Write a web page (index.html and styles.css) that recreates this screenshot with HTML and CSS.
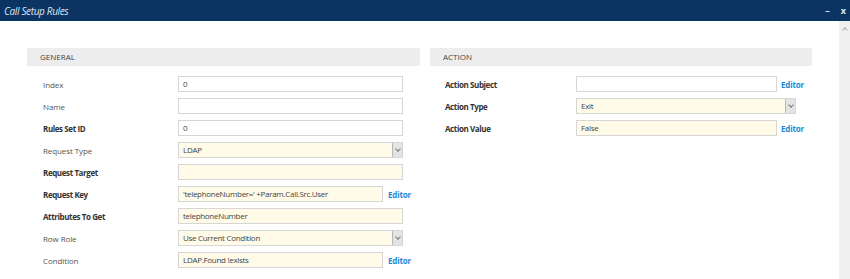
FILE: index.html
```html
<!DOCTYPE html>
<html lang="en">
<head>
  <meta charset="UTF-8" />
  <title>Call Setup Rules</title>
  <link rel="stylesheet" href="styles.css">
</head>
<body>
  <!-- Window title bar -->
  <div class="titlebar">
    <span class="title">Call Setup Rules</span>
    <span class="win-btn">&ndash;</span>
    <span class="win-btn close">x</span>
  </div>

  <div class="content">
    <div class="main">
      <!-- General section -->
      <div class="panel general">
        <div class="panel-head">GENERAL</div>
        <div class="rows">
          <div class="row"><span class="label">Index</span><div class="field">0</div></div>
          <div class="row"><span class="label">Name</span><div class="field"></div></div>
          <div class="row"><span class="label strong">Rules Set ID</span><div class="field">0</div></div>
          <div class="row"><span class="label">Request Type</span><div class="field select changed">LDAP<span class="arrow"></span></div></div>
          <div class="row"><span class="label strong">Request Target</span><div class="field changed"></div></div>
          <div class="row"><span class="label strong">Request Key</span><div class="field short changed">'telephoneNumber=' +Param.Call.Src.User</div><a class="editor">Editor</a></div>
          <div class="row"><span class="label strong">Attributes To Get</span><div class="field changed">telephoneNumber</div></div>
          <div class="row"><span class="label">Row Role</span><div class="field select changed">Use Current Condition<span class="arrow"></span></div></div>
          <div class="row"><span class="label">Condition</span><div class="field short changed">LDAP.Found !exists</div><a class="editor">Editor</a></div>
        </div>
      </div>

      <!-- Action section -->
      <div class="panel action">
        <div class="panel-head">ACTION</div>
        <div class="rows">
          <div class="row"><span class="label strong">Action Subject</span><div class="field short"></div><a class="editor">Editor</a></div>
          <div class="row"><span class="label strong">Action Type</span><div class="field select changed">Exit<span class="arrow"></span></div></div>
          <div class="row"><span class="label strong">Action Value</span><div class="field short changed">False</div><a class="editor">Editor</a></div>
        </div>
      </div>
    </div>

    <!-- Vertical scrollbar -->
    <div class="scrollbar"><span class="up"></span></div>
  </div>
</body>
</html>
```

FILE: styles.css
```css
html, body {
  margin: 0;
  padding: 0;
  height: 100%;
  overflow: hidden;
  background: #fff;
  font-family: "Open Sans", Arial, sans-serif;
  color: #444;
}
/* Dark navy title bar */
.titlebar {
  height: 21px;
  background: #0b3462;
  display: flex;
  align-items: center;
  padding: 0 4px 0 4px;
  color: #dbe6f3;
}
.title {
  flex: 1;
  font-style: italic;
  font-size: 10px;
  letter-spacing: -0.35px;
}
.win-btn {
  font-size: 9px;
  font-weight: bold;
  margin-left: 11px;
}
.content {
  display: flex;
  height: calc(100% - 21px);
}
.main {
  flex: 1;
  display: flex;
  gap: 10px;
  padding: 27px 0 0 27px;
}
.panel.general { width: 393px; }
.panel.action { width: 382px; }
.panel-head {
  height: 18px;
  line-height: 18px;
  background: #ededed;
  padding-left: 13px;
  font-size: 8px;
  color: #444;
}
.rows {
  margin-top: 7px;
  padding-left: 16px;
}
.action .rows { padding-left: 15px; }
.row {
  height: 22px;
  display: flex;
  align-items: center;
}
.label {
  width: 135px;
  font-size: 8px;
  color: #555;
  letter-spacing: -0.1px;
}
.action .label { width: 131px; }
.label.strong {
  font-weight: bold;
  color: #333;
  letter-spacing: -0.4px;
}
/* Input boxes */
.field {
  position: relative;
  box-sizing: border-box;
  width: 225px;
  height: 16px;
  line-height: 14px;
  border: 1px solid #d6d6d6;
  background: #fff;
  padding-left: 4px;
  font-size: 8px;
  letter-spacing: -0.3px;
  color: #444;
  white-space: nowrap;
}
.field.short { width: 205px; }
.action .field { width: 220px; }
.action .field.short { width: 201px; }
.field.changed { background: #fffbe8; }
/* Dropdown button */
.field .arrow {
  position: absolute;
  top: 0;
  right: 0;
  width: 9px;
  height: 14px;
  background: #e4e4e4;
  border-left: 1px solid #b8b8b8;
}
.field .arrow::after {
  content: "";
  position: absolute;
  left: 3px;
  top: 4px;
  width: 3px;
  height: 3px;
  border-right: 1px solid #777;
  border-bottom: 1px solid #777;
  transform: rotate(45deg);
}
.editor {
  margin-left: 5px;
  font-size: 8px;
  font-weight: bold;
  letter-spacing: -0.2px;
  color: #1b8ad6;
  cursor: pointer;
}
.action .editor { margin-left: 4px; }
.scrollbar {
  position: relative;
  width: 11px;
  background: #f0f0f0;
}
.scrollbar .up {
  position: absolute;
  left: 4px;
  top: 7px;
  width: 3px;
  height: 3px;
  border-left: 1px solid #b0b0b0;
  border-top: 1px solid #b0b0b0;
  transform: rotate(45deg);
}
```
